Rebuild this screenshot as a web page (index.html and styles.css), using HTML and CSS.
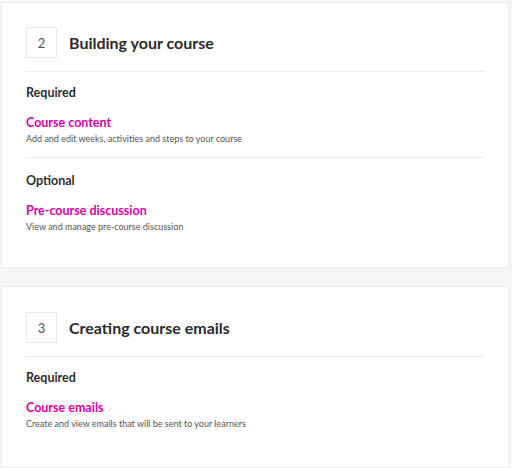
FILE: index.html
```html
<!DOCTYPE html>
<html lang="en">
<head>
<meta charset="utf-8">
<title>Course setup</title>
<link rel="stylesheet" href="styles.css">
</head>
<body>
<div class="page">
  <section class="card card-first">
    <div class="card-header">
      <div class="step-num">2</div>
      <h2 class="card-title">Building your course</h2>
    </div>
    <div class="group">
      <h3 class="group-label">Required</h3>
      <a class="task-link" href="#">Course content</a>
      <p class="task-desc">Add and edit weeks, activities and steps to your course</p>
    </div>
    <div class="group group-last">
      <h3 class="group-label">Optional</h3>
      <a class="task-link" href="#">Pre-course discussion</a>
      <p class="task-desc">View and manage pre-course discussion</p>
    </div>
  </section>
  <section class="card card-second">
    <div class="card-header">
      <div class="step-num">3</div>
      <h2 class="card-title">Creating course emails</h2>
    </div>
    <div class="group group-last">
      <h3 class="group-label">Required</h3>
      <a class="task-link" href="#">Course emails</a>
      <p class="task-desc">Create and view emails that will be sent to your learners</p>
    </div>
  </section>
</div>
</body>
</html>
```

FILE: styles.css
```css
html, body {
  margin: 0;
  padding: 0;
  background: #f6f6f6;
  font-family: Lato, "Noto Sans", sans-serif;
  color: #333;
}

.page {
  display: flex;
  flex-direction: column;
  gap: 18px;
  padding: 2px 3px 0 1px;
}

.card {
  background: #fff;
  border: 1px solid #ebebeb;
  padding: 24px 24px 34px 24px;
}

.card-first {
  padding-bottom: 34px;
}

.card-second {
  padding-top: 25px;
  padding-bottom: 37px;
}

.card-header {
  display: flex;
  align-items: center;
  gap: 12px;
  padding-bottom: 13px;
  border-bottom: 1px solid #ececec;
}

.step-num {
  width: 29px;
  height: 29px;
  border: 1px solid #e9e9e9;
  display: flex;
  align-items: center;
  justify-content: center;
  font-size: 13px;
  font-weight: 400;
  color: #555;
}

.card-title {
  margin: 0;
  font-size: 16px;
  font-weight: 700;
  color: #2b2b2b;
  line-height: 20px;
}

.group {
  display: flex;
  flex-direction: column;
  align-items: flex-start;
  padding: 13px 0 12px;
  border-bottom: 1px solid #ececec;
}

.group + .group {
  padding-top: 15px;
}

.group-last {
  border-bottom: none;
  padding-bottom: 0;
}

.group-label {
  margin: 0 0 14px;
  font-size: 12.5px;
  line-height: 16px;
  font-weight: 700;
  color: #2e2e2e;
}

.task-link {
  font-size: 12.5px;
  line-height: 16px;
  font-weight: 700;
  color: #de00a5;
  text-decoration: none;
}

.task-desc {
  margin: 2px 0 0;
  font-size: 9px;
  line-height: 12px;
  color: #555;
}
```
